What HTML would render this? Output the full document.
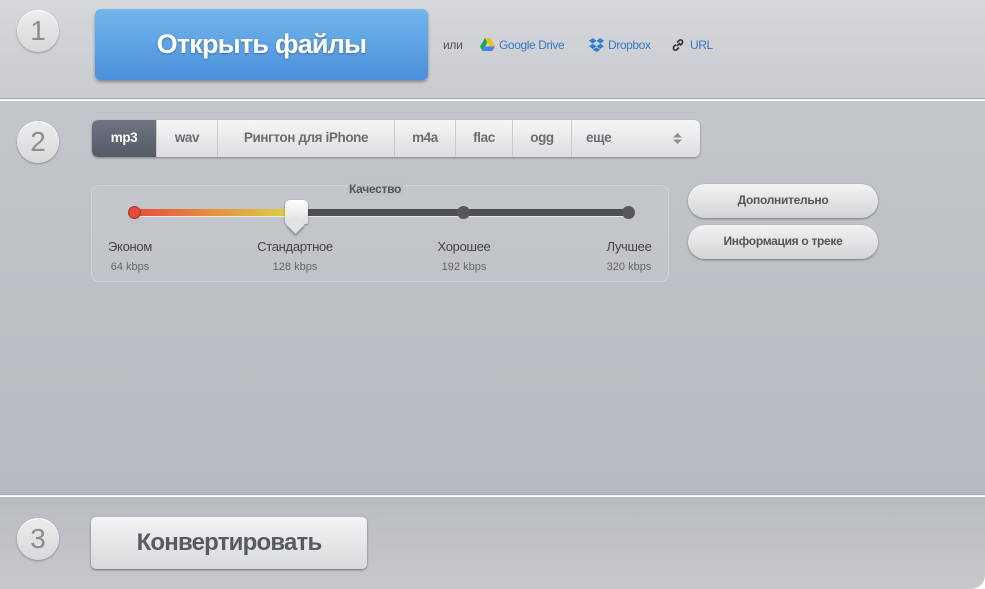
<!DOCTYPE html>
<html><head><meta charset="utf-8">
<style>
*{margin:0;padding:0;box-sizing:border-box}
body{width:985px;height:589px;overflow:hidden;background:#fff;font-family:"Liberation Sans",sans-serif;position:relative}
.wrap{position:absolute;left:0;top:0;width:985px;height:589px;border-radius:0 0 14px 0;overflow:hidden}
.s1{position:absolute;left:0;top:0;width:985px;height:99px;background:linear-gradient(#d6d7da,#c9cbcf)}
.s2{position:absolute;left:0;top:101px;width:985px;height:394px;background:linear-gradient(#c3c6ca,#b6bac0)}
.s3{position:absolute;left:0;top:497px;width:985px;height:92px;background:linear-gradient(#b9bcc1,#c6c8cc)}
.line{position:absolute;left:0;width:985px;height:2px;background:#eef0f2;border-top:1px solid #a8abb0}
.num{position:absolute;left:17px;width:42px;height:42px;border-radius:50%;background:linear-gradient(#eceded,#d6d8da);box-shadow:0 1px 2px rgba(0,0,0,.3),inset 0 1px 0 #fff;color:#8a8d92;font-size:28px;text-align:center;line-height:42px}
.open{position:absolute;left:95px;top:9px;width:333px;height:71px;border-radius:6px;background:linear-gradient(#72b6ec,#4a90dc);box-shadow:0 2px 3px rgba(0,0,0,.35);color:#fff;font-size:27px;font-weight:bold;text-align:center;line-height:71px;text-shadow:0 1px 2px rgba(0,0,0,.3);letter-spacing:-.8px}
.or{position:absolute;top:38px;font-size:12px;color:#555;letter-spacing:-.3px}
.lnk{position:absolute;top:38px;font-size:12px;color:#3a78c8;letter-spacing:-.4px}
.tabs{position:absolute;left:92px;top:120px;width:608px;height:37px;border-radius:6px;background:linear-gradient(#f6f6f7,#dcdde0);box-shadow:0 1px 2px rgba(0,0,0,.35);display:flex;overflow:hidden}
.tab{flex:none;height:37px;line-height:35px;font-size:13.5px;font-weight:bold;color:#6a6d72;text-align:center;border-right:1px solid #c8cacd;white-space:nowrap;letter-spacing:-.4px;position:relative}
.tab.a{background:linear-gradient(#6e7480,#545a66);color:#fff}
.box{position:absolute;left:91px;top:185px;width:578px;height:97px;border:1px solid #cfd2d6;border-radius:8px;background:rgba(255,255,255,.06)}
.ttl{position:absolute;left:347px;top:182px;font-size:12px;font-weight:bold;color:#555;background:#bfc2c7;padding:0 2px;letter-spacing:-.3px}
.track{position:absolute;left:134px;top:209px;width:494px;height:7px;border-radius:4px;background:#4e5054;box-shadow:0 1px 0 #e8e9eb}
.fill{position:absolute;left:134px;top:209px;width:162px;height:7px;border-radius:4px;background:linear-gradient(90deg,#e84a3a,#e88a40 45%,#d8d840)}
.dot{position:absolute;top:206px;width:13px;height:13px;border-radius:50%;background:#55575b}
.knob{position:absolute;left:285px;top:200px;width:23px;height:24px;border-radius:5px 5px 2px 2px;background:linear-gradient(#fff,#dcdde0);box-shadow:0 1px 2px rgba(0,0,0,.4)}
.knob:after{content:"";position:absolute;left:4px;top:18px;width:13px;height:13px;background:#e2e3e5;transform:rotate(45deg);box-shadow:2px 2px 2px rgba(0,0,0,.25)}
.lb{position:absolute;top:239px;font-size:13px;color:#444;text-align:center;width:110px;letter-spacing:-.3px}
.kb{position:absolute;top:261px;font-size:11px;color:#666;text-align:center;width:110px}
.btn{position:absolute;left:688px;width:190px;height:34px;border-radius:17px;background:linear-gradient(#f3f3f4,#d2d4d7);box-shadow:0 1px 2px rgba(0,0,0,.4);font-size:12px;font-weight:bold;color:#555;text-align:center;line-height:33px;letter-spacing:-.3px}
.conv{position:absolute;left:91px;top:517px;width:276px;height:52px;border-radius:5px;background:linear-gradient(#f4f4f5,#d7d9dc);box-shadow:0 1px 2px rgba(0,0,0,.45);font-size:24px;font-weight:bold;color:#575b62;text-align:center;line-height:52px;letter-spacing:-.8px}
</style></head><body>
<div class="wrap">
<div class="s1"></div>
<div class="line" style="top:98px"></div>
<div class="s2"></div>
<div class="line" style="top:494px"></div>
<div class="s3"></div>
</div>
<div class="num" style="top:10px">1</div>
<div class="num" style="top:121px">2</div>
<div class="num" style="top:518px">3</div>
<div class="open">Открыть файлы</div>
<div class="or" style="left:443px">или</div>
<svg style="position:absolute;left:480px;top:38px" width="15" height="13" viewBox="0 0 15 13"><path d="M5 0h5l5 8.5h-5z" fill="#f4c20d"/><path d="M5 0L0 8.5l2.5 4.5 5-8.5z" fill="#1fa463"/><path d="M2.5 13h10L15 8.5H5z" fill="#4285f4"/></svg>
<div class="lnk" style="left:499px">Google Drive</div>
<svg style="position:absolute;left:589px;top:38px" width="15" height="14" viewBox="0 0 15 14"><path d="M4 0L0 2.7l3.5 2.8 4-2.5zM11 0l4 2.7-3.5 2.8-4-2.5zM0 8.3l4 2.7 3.5-2.8-4-2.5zM15 8.3l-4 2.7-3.5-2.8 4-2.5zM3.8 11.8l3.7 2.2 3.7-2.2-3.7-2.3z" fill="#2d7fd6"/></svg>
<div class="lnk" style="left:608px">Dropbox</div>
<svg style="position:absolute;left:671px;top:38px" width="14" height="14" viewBox="0 0 14 14"><g fill="none" stroke="#333" stroke-width="1.6"><path d="M6 8l3-3"/><path d="M5 6.5L3 8.5a2 2 0 003 3L8 9.5"/><path d="M9 7.5l2-2a2 2 0 00-3-3L6 4.5"/></g></svg>
<div class="lnk" style="left:690px">URL</div>
<div class="tabs">
<div class="tab a" style="width:65px">mp3</div>
<div class="tab" style="width:61px">wav</div>
<div class="tab" style="width:177px">Рингтон для iPhone</div>
<div class="tab" style="width:61px">m4a</div>
<div class="tab" style="width:57px">flac</div>
<div class="tab" style="width:59px">ogg</div>
<div class="tab" style="width:128px;border:none;text-align:left;padding-left:14px">еще<svg style="position:absolute;left:101px;top:13px" width="9" height="11" viewBox="0 0 9 11"><path d="M4.5 0L9 4.5H0zM4.5 11L0 6.5h9z" fill="#8a8d92"/></svg></div>
</div>
<div class="box"></div>
<div class="ttl">Качество</div>
<div class="track"></div>
<div class="fill"></div>
<div class="dot" style="left:128px;background:#e24a3c;border:1px solid #b03028"></div>
<div class="dot" style="left:457px"></div>
<div class="dot" style="left:622px"></div>
<div class="knob"></div>
<div class="lb" style="left:75px">Эконом</div><div class="kb" style="left:75px">64 kbps</div>
<div class="lb" style="left:240px">Стандартное</div><div class="kb" style="left:240px">128 kbps</div>
<div class="lb" style="left:409px">Хорошее</div><div class="kb" style="left:409px">192 kbps</div>
<div class="lb" style="left:574px">Лучшее</div><div class="kb" style="left:574px">320 kbps</div>
<div class="btn" style="top:184px">Дополнительно</div>
<div class="btn" style="top:225px">Информация о треке</div>
<div class="conv">Конвертировать</div>
</body></html>
